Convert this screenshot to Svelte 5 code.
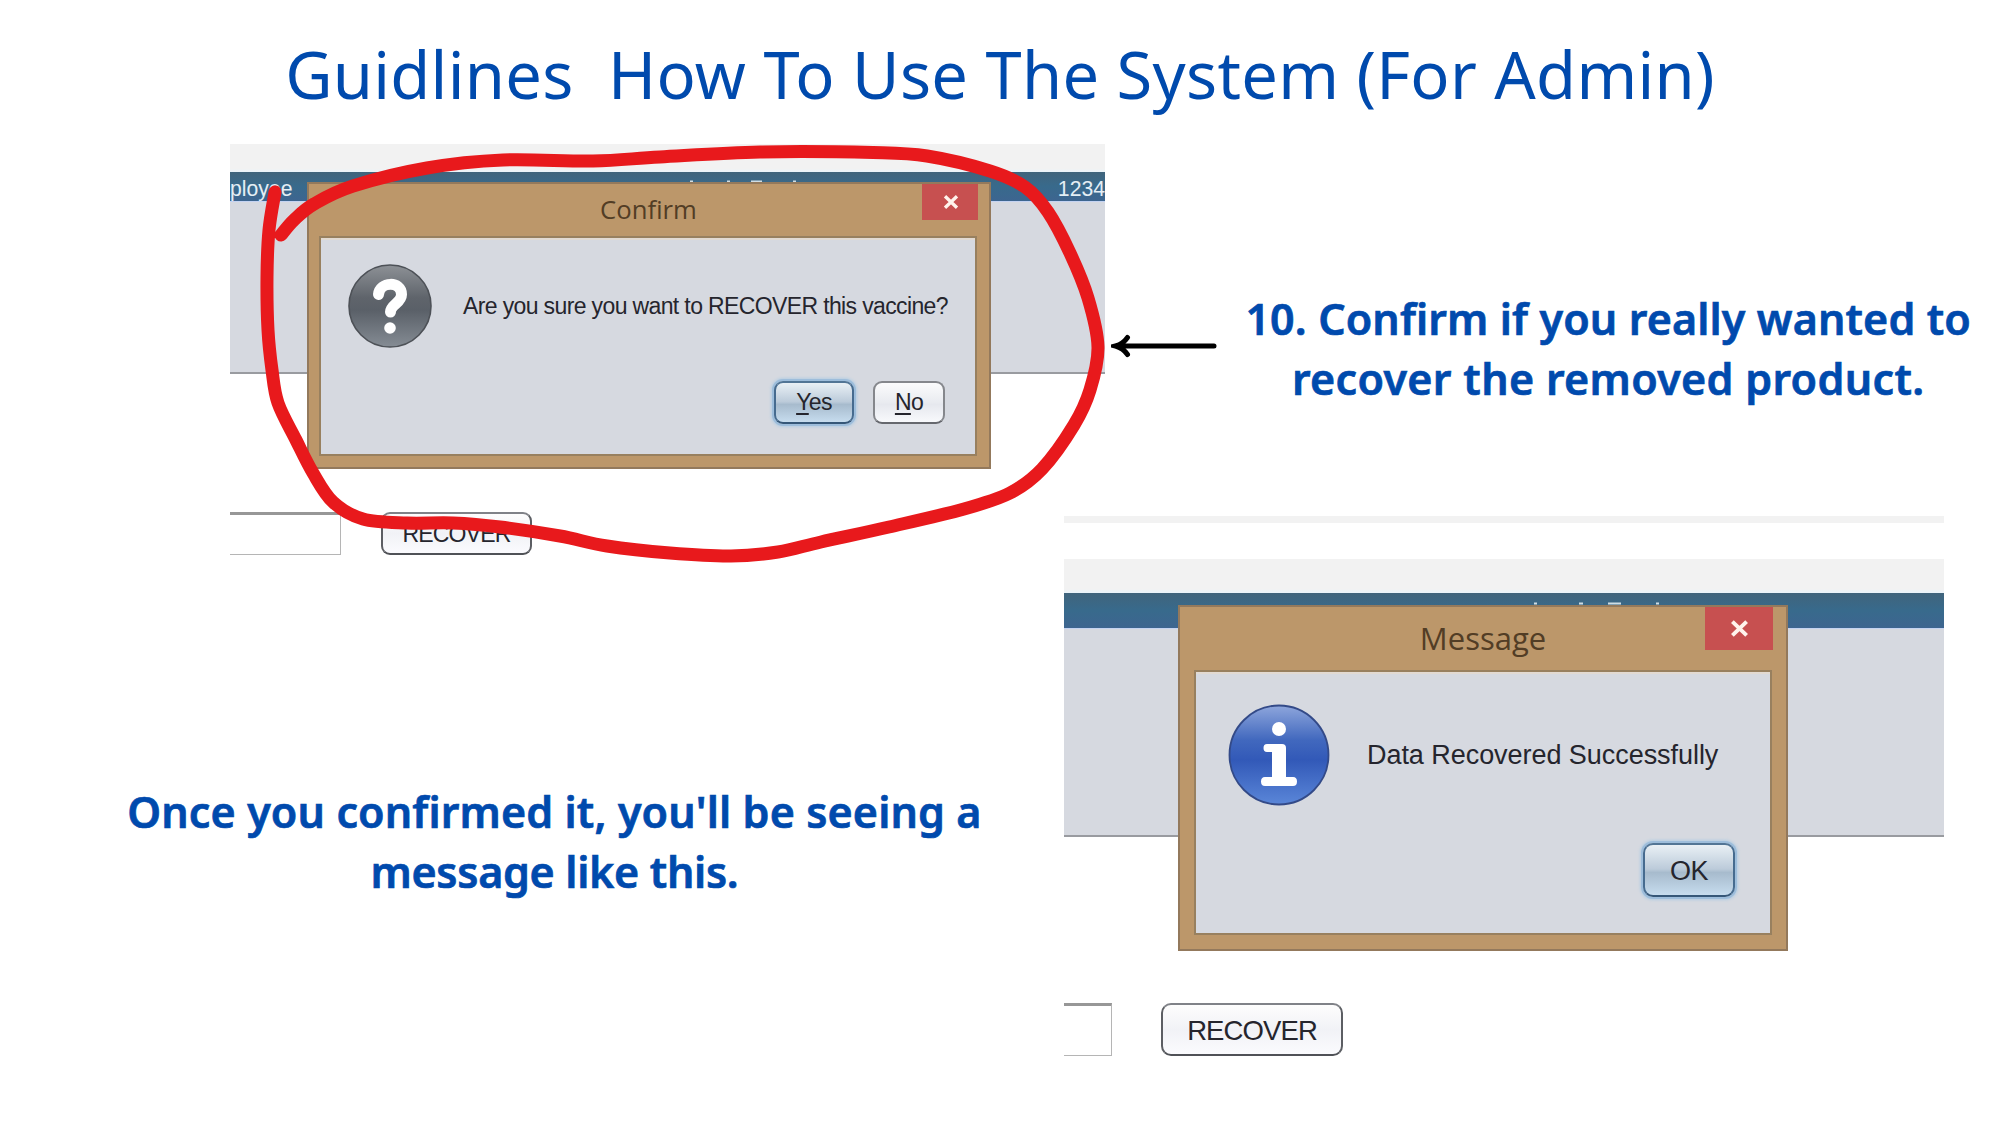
<script>
  // Centre line of the hand-drawn marker loop, in slide pixels.
  const loop = [
    [275, 192], [269, 230], [267, 277], [268, 330], [272, 370], [278, 403], [296, 440], [313, 473],
    [333, 502], [363, 519], [407, 523], [453, 523], [500, 527], [560, 536], [607, 546], [670, 553],
    [731, 556], [778, 552], [821, 542], [889, 527], [964, 509], [1010, 493], [1042, 469], [1074, 425],
    [1090, 390], [1098, 347], [1088, 298], [1070, 253], [1048, 212], [1025, 187], [990, 171], [927, 156],
    [873, 152.5], [760, 152], [660, 157], [593, 161], [503, 160], [427, 168], [353, 186], [314, 204],
    [294, 220], [281, 235]
  ];

  // Catmull-Rom spline through the points, written as cubic segments.
  function smooth(p) {
    let d = `M${p[0]}`;
    for (let i = 0; i < p.length - 1; i++) {
      const a = p[i - 1] ?? p[i], b = p[i], c = p[i + 1], e = p[i + 2] ?? c;
      d += ` C${b[0] + (c[0] - a[0]) / 6},${b[1] + (c[1] - a[1]) / 6} ${c[0] - (e[0] - b[0]) / 6},${c[1] - (e[1] - b[1]) / 6} ${c}`;
    }
    return d;
  }
</script>

{#snippet cross()}
  <svg class="cross" viewBox="0 0 16 14"><path d="M2 1.2 14 12.8M14 1.2 2 12.8" /></svg>
{/snippet}

<main class="slide">
  <h1>Guidlines&nbsp; How To Use The System (For Admin)</h1>

  <section class="shot first">
    <div class="strip"></div>
    <div class="bar"><span>ployee</span><span>1234</span></div>
    <div class="panel"></div>
    <div class="form"><span class="field"></span><span class="btn wide">RECOVER</span></div>
    <svg class="tops" viewBox="0 0 110 3"><path d="M1 1.5h3M38 1.5h3M62 1.5h11M104 1.5h3" /></svg>

    <div class="dialog">
      <header><span class="title">Confirm</span><span class="close">{@render cross()}</span></header>
      <div class="content">
        <div class="message">
          <svg class="icon" viewBox="0 0 84 84">
            <defs>
              <linearGradient id="grey" x1="0" y1="0" x2="0" y2="1">
                <stop offset="0" stop-color="#8d9196" /><stop offset=".4" stop-color="#5f646b" />
                <stop offset=".55" stop-color="#5a6068" /><stop offset="1" stop-color="#858c94" />
              </linearGradient>
            </defs>
            <circle cx="42" cy="42" r="41" fill="url(#grey)" stroke="#4d5157" stroke-width="1.6" />
            <path d="M30.500 30.500C31.500 17.500 53.500 16.500 53.500 30.500C53.500 39 42.500 40.500 42.500 48" fill="none" stroke="#fff" stroke-width="11" stroke-linecap="round" />
            <circle cx="42" cy="64" r="5.8" fill="#fff" />
          </svg>
          <p>Are you sure you want to RECOVER this vaccine?</p>
        </div>
        <div class="actions">
          <span class="btn primary"><span><u>Y</u>es</span></span>
          <span class="btn"><span><u>N</u>o</span></span>
        </div>
      </div>
    </div>
  </section>

  <aside class="note one">
    <svg class="arrow" viewBox="0 0 106 24"><path d="M103 12H5M16.500 3.500Q12 10 4.500 12Q12 14 16.500 20.500" /></svg>
    <p><span class="l1">10. Confirm if you really wanted to</span><br /><span class="l2">recover the removed product.</span></p>
  </aside>

  <aside class="note two">
    <p><span class="l3">Once you confirmed it, you'll be seeing a</span><br /><span class="l4">message like this.</span></p>
  </aside>

  <section class="shot second">
    <div class="hairline"></div>
    <div class="strip"></div>
    <div class="bar"></div>
    <div class="panel"></div>
    <div class="form"><span class="field"></span><span class="btn wide">RECOVER</span></div>
    <svg class="tops" viewBox="0 0 132 3"><path d="M1 1.500h3M46 1.500h4M75 1.500h13M123 1.500h3" /></svg>

    <div class="dialog">
      <header><span class="title">Message</span><span class="close">{@render cross()}</span></header>
      <div class="content">
        <div class="message">
          <svg class="icon" viewBox="0 0 102 102">
            <defs>
              <linearGradient id="blue" x1="0" y1="0" x2="0" y2="1">
                <stop offset="0" stop-color="#8ea6dc" /><stop offset=".35" stop-color="#4168be" />
                <stop offset=".55" stop-color="#3259b8" /><stop offset="1" stop-color="#5a86d8" />
              </linearGradient>
            </defs>
            <circle cx="51" cy="51" r="49.500" fill="url(#blue)" stroke="#334a88" stroke-width="1.8" />
            <circle cx="51" cy="25" r="7" fill="#fff" />
            <path d="M39 40H54Q58 40 58 44V73H65Q69 73 69 77.500Q69 82 65 82H37Q33 82 33 77.500Q33 73 37 73H44V48H39Q35.500 48 35.500 44Q35.500 40 39 40Z" fill="#fff" />
          </svg>
          <p>Data Recovered Successfully</p>
        </div>
        <div class="actions"><span class="btn primary">OK</span></div>
      </div>
    </div>
  </section>

  <svg class="marker" viewBox="0 0 2000 1125"><path d={smooth(loop)} /></svg>
</main>

<style>
  :global(body) { background: #fff; }
  .slide {
    position: relative;
    width: 2000px;
    height: 1125px;
    overflow: hidden;
    display: grid;
    grid-template-columns: 230px 834px 41px 839px 56px;
    grid-template-rows: 144px 372px 40px 504px 65px;
    font-family: "Liberation Sans", Arial, sans-serif;
  }
  h1 {
    grid-area: 1 / 1 / 2 / 6;
    margin: 0;
    text-align: center;
    font: 400 65px/90px "Noto Sans", sans-serif;
    letter-spacing: 0.3px;
    padding-top: 29px;
    color: #004aad;
    white-space: nowrap;
  }
  p { margin: 0; white-space: nowrap; }

  .shot { position: relative; overflow: hidden; display: flex; flex-direction: column; }
  .first { grid-area: 2 / 2 / 4 / 4; }
  .second { grid-area: 3 / 3 / 5 / 5; }
  .strip { background: linear-gradient(#f2f2f2 88%, #eaf4fa); flex: none; height: 28px; }
  .bar {
    flex: none;
    height: 29px;
    background: linear-gradient(#40647c, #386a8c 50%, #3d6590);
    color: #e4eef4;
    font-size: 21.2px;
    line-height: 33px;
    display: flex;
    justify-content: space-between;
    white-space: nowrap;
  }
  .panel { flex: none; height: 173px; background: #d6d9e0; border-top: 1px solid #c4d3f2; border-bottom: 2px solid #999ba0; box-sizing: border-box; }
  .form { display: flex; }
  .field { box-sizing: border-box; border: 1px solid #b5b5b5; border-left: 0; border-top: 3px solid #979797; background: #fff; }
  .tops { position: absolute; }
  .tops path { stroke: #cfdde4; stroke-width: 2; }

  .btn {
    box-sizing: border-box;
    display: flex;
    align-items: center;
    justify-content: center;
    border: 2px solid #85878c;
    border-bottom-color: #66686e;
    border-radius: 9px;
    background: linear-gradient(#fbfbfc, #e9ebf0 50%, #e6e8ee 55%, #f8f9fc);
    color: #25252d;
    white-space: nowrap;
  }
  .btn u { text-underline-offset: 3px; text-decoration-thickness: 2px; }
  .btn.wide { border-color: #808288 #5c5e63 #505257; background: linear-gradient(#fdfdfd, #f1f2f6 50%, #fbfbfe); padding-top: 2px; }
  .btn.primary {
    border-color: #527595 #466b8f #355778;
    background: linear-gradient(#e9f0f5, #bccbda 48%, #a7bbcd 55%, #c6dcee);
    box-shadow: 0 0 0 2px #9dbddb, 0 0 3px 3px #b4cde2;
  }

  .dialog {
    position: absolute;
    box-sizing: border-box;
    border: 2px solid #93795c;
    background: #bc976a;
    display: flex;
    flex-direction: column;
  }
  .dialog header { position: relative; display: flex; justify-content: center; flex: none; }
  .title { color: #523d25; font-family: "Open Sans", "Noto Sans", sans-serif; }
  .close { position: absolute; top: 0; background: #c75050; display: flex; align-items: center; justify-content: center; }
  .cross path { stroke: #fff3ec; stroke-width: 3.3; fill: none; }
  .content {
    flex: 1;
    background: #d6d9e0;
    outline: 2px solid #98805f;
    border-top: 2px solid #e2dad2;
    display: flex;
    flex-direction: column;
    justify-content: space-between;
    color: #25252d;
  }
  .message { display: flex; align-items: center; }
  .icon { flex: none; }
  .actions { display: flex; justify-content: flex-end; }

  .first .form { padding-top: 138px; gap: 40px; }
  .first .field { width: 111px; height: 43px; }
  .first .wide { width: 151px; height: 43px; font-size: 23px; letter-spacing: -0.8px; }
  .first .tops { left: 459px; top: 36px; width: 110px; height: 3px; }
  .first .dialog { left: 77px; top: 38px; width: 684px; height: 287px; padding: 0 14px 13px 12px; }
  .first header { height: 54px; }
  .first .title { font-size: 25.7px; line-height: 52px; padding-left: 1px; }
  .first .close { right: -3px; width: 56px; height: 36px; }
  .first .cross { width: 16px; height: 14px; margin-left: 1px; }
  .first .content { padding: 24px 30px 30px 27px; }
  .first .message { gap: 31px; font-size: 23px; letter-spacing: -0.63px; }
  .first .icon { width: 84px; height: 84px; }
  .first .actions { gap: 19px; }
  .first .actions .btn { width: 72px; height: 43px; font-size: 23px; letter-spacing: -0.6px; }
  .first .actions .primary { width: 80px; }

  .hairline { flex: none; height: 7px; background: #f2f2f2; margin-bottom: 36px; }
  .second .strip { height: 34px; }
  .second .bar { height: 35px; }
  .second .panel { height: 209px; }
  .second .form { padding-top: 166px; gap: 49px; }
  .second .field { width: 48px; height: 53px; }
  .second .wide { width: 182px; height: 53px; font-size: 27.5px; letter-spacing: -0.9px; }
  .second .tops { left: 469px; top: 86px; width: 132px; height: 3px; }
  .second .dialog { left: 114px; top: 89px; width: 610px; height: 346px; padding: 0 16px 16px 16px; }
  .second header { height: 65px; }
  .second .title { font-size: 31px; line-height: 63px; }
  .second .close { right: -3px; width: 68px; height: 43px; }
  .second .cross { width: 19px; height: 17px; }
  .second .content { padding: 30px 35px 36px 32px; }
  .second .message { gap: 37px; font-size: 27px; letter-spacing: -0.05px; }
  .second .icon { width: 102px; height: 102px; }
  .second .btn { border-radius: 10px; }
  .second .actions .btn { width: 92px; height: 54px; font-size: 27px; letter-spacing: -0.5px; padding-top: 2px; }

  .note { color: #004aad; font: 600 43px/60px "Noto Sans", sans-serif; text-align: center; display: flex; -webkit-text-stroke: 0.7px #004aad; }
  .l1, .l3 { letter-spacing: 0.13px; }
  .l2 { letter-spacing: 0.33px; }
  .l4 { letter-spacing: -0.3px; }
  .one { grid-area: 2 / 4 / 3 / 6; justify-content: space-between; padding: 145px 29px 0 6px; align-items: flex-start; }
  .arrow { width: 106px; height: 24px; margin-top: 45px; flex: none; }
  .arrow path { fill: none; stroke: #000; stroke-width: 5; stroke-linecap: round; }
  .two { grid-area: 4 / 1 / 5 / 3; justify-content: center; padding: 226px 0 0 45px; align-items: flex-start; }

  .marker { position: absolute; inset: 0; width: 2000px; height: 1125px; pointer-events: none; }
  .marker path { fill: none; stroke: #e8191c; stroke-width: 13; stroke-linecap: round; stroke-linejoin: round; }
</style>
